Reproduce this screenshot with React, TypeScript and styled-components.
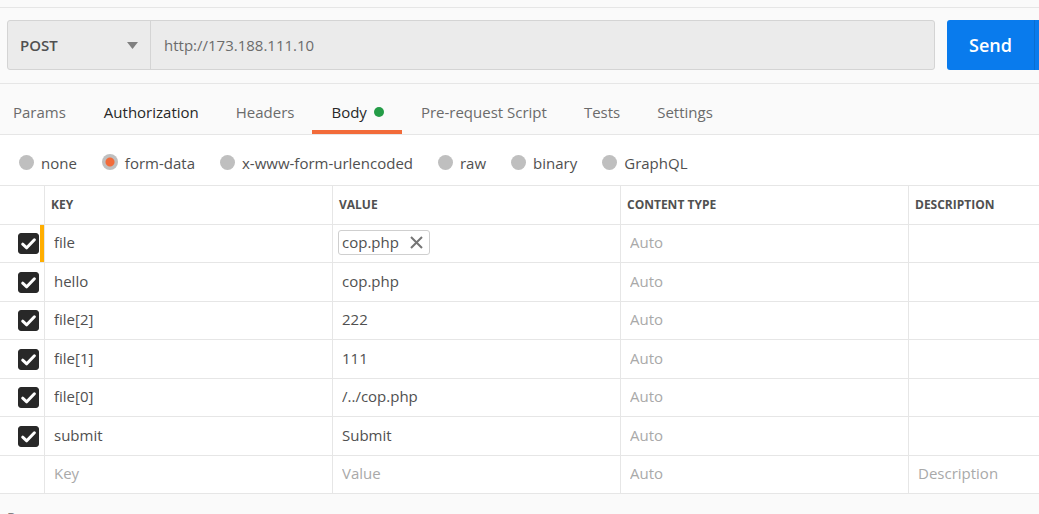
import React, { useState } from "react";
import styled, { createGlobalStyle } from "styled-components";

const GlobalStyle = createGlobalStyle`
  *, *::before, *::after { box-sizing: border-box; }
  body {
    margin: 0;
    background: #fafafa;
    color: #505050;
    font-family: "Open Sans", "Noto Sans", sans-serif;
    font-size: 15px;
    line-height: 20px;
  }
  button, input, select { font: inherit; color: inherit; margin: 0; }
`;

const Page = styled.main`
  display: flex;
  flex-direction: column;
  height: 100vh;
  overflow: hidden;
`;

const TopStrip = styled.div`
  flex: none;
  height: 8px;
  border-bottom: 1px solid #e6e6e6;
`;

const RequestBar = styled.form`
  flex: none;
  display: flex;
  gap: 12px;
  padding: 12px 0 13px 7px;
  border-bottom: 1px solid #e6e6e6;
`;

const UrlGroup = styled.div`
  display: flex;
  flex: 1;
  min-width: 0;
  height: 50px;
  border: 1px solid #d4d4d4;
  border-radius: 3px;
  background: #ebebeb;
`;

const MethodBox = styled.div`
  display: grid;
  grid-template-columns: 1fr 23px;
  align-items: center;
  width: 143px;
  border-right: 1px solid #d4d4d4;
`;

const MethodSelect = styled.select`
  grid-area: 1 / 1 / 2 / 3;
  width: 100%;
  height: 100%;
  padding: 0 12px;
  border: 0;
  background: transparent;
  appearance: none;
  font-weight: 600;
  outline: none;
`;

const MethodArrow = styled.svg`
  grid-area: 1 / 2;
  width: 11px;
  height: 7px;
  fill: #808080;
  pointer-events: none;
`;

const UrlInput = styled.input`
  flex: 1;
  min-width: 0;
  padding: 0 13px;
  border: 0;
  background: transparent;
  color: #6b6b6b;
  outline: none;
`;

const SendGroup = styled.div`
  display: flex;
  height: 50px;
  border-radius: 3px 0 0 3px;
  overflow: hidden;
`;

const SendButton = styled.button`
  width: 87px;
  padding: 0;
  border: 0;
  background: #097bed;
  color: #fff;
  font-size: 18px;
  font-weight: 600;
`;

const SendMore = styled.button`
  width: 5px;
  padding: 0;
  border: 0;
  border-left: 1px solid #0a6dd0;
  background: #097bed;
`;

const Tabs = styled.nav`
  flex: none;
  display: flex;
  height: 51px;
  border-bottom: 1px solid #e6e6e6;
`;

const Tab = styled.button<{ $active?: boolean; $strong?: boolean }>`
  display: flex;
  align-items: center;
  gap: 7px;
  padding: 10px 18px 0 19px;
  border: 0;
  border-bottom: 4px solid ${(p) => (p.$active ? "#f26b3a" : "transparent")};
  background: none;
  color: ${(p) => (p.$active || p.$strong ? "#282828" : "#6b6b6b")};
  white-space: nowrap;

  &:first-child { padding: 10px 19px 0 13px; }
`;

const StatusDot = styled.span`
  width: 10px;
  height: 10px;
  border-radius: 50%;
  background: #249c47;
`;

const BodyPanel = styled.section`
  flex: none;
  background: #fff;
`;

const ModeList = styled.div`
  display: flex;
  align-items: center;
  gap: 25px;
  height: 50px;
  padding: 6px 19px 0;
`;

const Mode = styled.label`
  display: flex;
  align-items: center;
  gap: 7px;
  white-space: nowrap;
`;

const Radio = styled.input`
  appearance: none;
  width: 15px;
  height: 15px;
  margin-bottom: 2px;
  border-radius: 50%;
  background: #bfbfbf;

  &:checked {
    width: 16px;
    height: 16px;
    background: radial-gradient(circle, #f26b3a 4px, #bfbfbf 5px);
  }
`;

const Table = styled.table`
  width: 100%;
  table-layout: fixed;
  border-collapse: separate;
  border-spacing: 0;
  border-top: 1px solid #e6e6e6;
`;

const CheckColumn = styled.col`
  width: 45px;
`;

const FieldColumn = styled.col`
  width: 288px;
`;

const Row = styled.tr`
  height: 38px;

  &:nth-child(even) { height: 39px; }
`;

const HeadCell = styled.th`
  height: 39px;
  padding: 0 6px;
  border-bottom: 1px solid #e6e6e6;
  border-right: 1px solid #e6e6e6;
  font-size: 12px;
  font-weight: 700;
  text-align: left;

  &:last-child { border-right: 0; }
`;

const Cell = styled.td`
  padding: 0 5px 3px;
  border-bottom: 1px solid #e6e6e6;
  border-right: 1px solid #e6e6e6;

  &:last-child { border-right: 0; }
`;

const CheckCell = styled(Cell)<{ $marked?: boolean }>`
  padding: 0 0 0 18px;
  box-shadow: ${(p) => (p.$marked ? "inset -4px 0 #ffae00" : "none")};
`;

const CheckBox = styled.span`
  display: grid;
  width: 21px;
  height: 21px;
`;

const CheckInput = styled.input`
  grid-area: 1 / 1;
  appearance: none;
  width: 21px;
  height: 21px;
  border: 1px solid #bfbfbf;
  border-radius: 3px;

  &:checked { background: #282828; border-color: #282828; }
`;

const CheckMark = styled.svg`
  grid-area: 1 / 1;
  width: 21px;
  height: 21px;
  fill: none;
  stroke: #fff;
  stroke-width: 3;
  stroke-linecap: round;
  stroke-linejoin: round;
  pointer-events: none;
`;

const CellInput = styled.input`
  display: block;
  width: 100%;
  height: 24px;
  padding: 0 4px;
  border: 0;
  background: transparent;
  outline: none;

  &::placeholder { color: #a9a9a9; opacity: 1; }
`;

const FileChip = styled.div`
  display: flex;
  align-items: center;
  gap: 11px;
  width: fit-content;
  height: 25px;
  padding: 0 6px 0 3px;
  border: 1px solid #cfcfcf;
  border-radius: 3px;
`;

const RemoveButton = styled.button`
  display: flex;
  padding: 0;
  border: 0;
  background: none;
`;

const RemoveIcon = styled.svg`
  width: 13px;
  height: 13px;
  stroke: #757575;
  stroke-width: 2;
`;

const ResponseTitle = styled.h2`
  flex: none;
  margin: 0;
  padding: 14px 7px;
  color: #808080;
  font-size: 14px;
  font-weight: 400;
  line-height: 20px;
`;

const tabs = [
  { name: "Params" },
  { name: "Authorization", strong: true },
  { name: "Headers" },
  { name: "Body", active: true },
  { name: "Pre-request Script" },
  { name: "Tests" },
  { name: "Settings" },
];

const modes = ["none", "form-data", "x-www-form-urlencoded", "raw", "binary", "GraphQL"];

const fields = [
  { key: "file", value: "cop.php", isFile: true },
  { key: "hello", value: "cop.php" },
  { key: "file[2]", value: "222" },
  { key: "file[1]", value: "111" },
  { key: "file[0]", value: "/../cop.php" },
  { key: "submit", value: "Submit" },
];

function Check({ label }: { label: string }) {
  const [on, setOn] = useState(true);
  return (
    <CheckBox>
      <CheckInput type="checkbox" aria-label={label} checked={on} onChange={() => setOn(!on)} />
      {on && (
        <CheckMark viewBox="0 0 21 21" aria-hidden="true">
          <path d="M4.7 11.2 8.7 14.8 16.4 6.8" />
        </CheckMark>
      )}
    </CheckBox>
  );
}

export default function App() {
  const [mode, setMode] = useState("form-data");

  return (
    <Page>
      <GlobalStyle />
      <TopStrip />
      <RequestBar onSubmit={(e) => e.preventDefault()}>
        <UrlGroup>
          <MethodBox>
            <MethodSelect aria-label="Method" defaultValue="POST">
              <option>POST</option>
            </MethodSelect>
            <MethodArrow viewBox="0 0 11 7" aria-hidden="true">
              <path d="M0 0h11L5.5 7z" />
            </MethodArrow>
          </MethodBox>
          <UrlInput aria-label="Request URL" defaultValue="http://173.188.111.10" />
        </UrlGroup>
        <SendGroup>
          <SendButton type="submit">Send</SendButton>
          <SendMore type="button" aria-label="More send options" />
        </SendGroup>
      </RequestBar>

      <Tabs>
        {tabs.map((t) => (
          <Tab key={t.name} type="button" $active={t.active} $strong={t.strong}>
            {t.name}
            {t.active && <StatusDot />}
          </Tab>
        ))}
      </Tabs>

      <BodyPanel>
        <ModeList role="radiogroup" aria-label="Body type">
          {modes.map((m) => (
            <Mode key={m}>
              <Radio type="radio" name="mode" checked={mode === m} onChange={() => setMode(m)} />
              {m}
            </Mode>
          ))}
        </ModeList>

        <Table>
          <colgroup>
            <CheckColumn />
            <FieldColumn />
            <FieldColumn />
            <FieldColumn />
            <col />
          </colgroup>
          <thead>
            <tr>
              <HeadCell />
              <HeadCell>KEY</HeadCell>
              <HeadCell>VALUE</HeadCell>
              <HeadCell>CONTENT TYPE</HeadCell>
              <HeadCell>DESCRIPTION</HeadCell>
            </tr>
          </thead>
          <tbody>
            {fields.map((f) => (
              <Row key={f.key}>
                <CheckCell $marked={f.isFile}>
                  <Check label={`Include ${f.key}`} />
                </CheckCell>
                <Cell>
                  <CellInput aria-label="Key" defaultValue={f.key} />
                </Cell>
                <Cell>
                  {f.isFile ? (
                    <FileChip>
                      {f.value}
                      <RemoveButton type="button" aria-label="Remove file">
                        <RemoveIcon viewBox="0 0 13 13" aria-hidden="true">
                          <path d="M1 1l11 11M12 1L1 12" />
                        </RemoveIcon>
                      </RemoveButton>
                    </FileChip>
                  ) : (
                    <CellInput aria-label="Value" defaultValue={f.value} />
                  )}
                </Cell>
                <Cell>
                  <CellInput aria-label="Content type" placeholder="Auto" />
                </Cell>
                <Cell>
                  <CellInput aria-label="Description" />
                </Cell>
              </Row>
            ))}
            <Row>
              <CheckCell />
              <Cell>
                <CellInput aria-label="New key" placeholder="Key" />
              </Cell>
              <Cell>
                <CellInput aria-label="New value" placeholder="Value" />
              </Cell>
              <Cell>
                <CellInput aria-label="New content type" placeholder="Auto" />
              </Cell>
              <Cell>
                <CellInput aria-label="New description" placeholder="Description" />
              </Cell>
            </Row>
          </tbody>
        </Table>
      </BodyPanel>

      <ResponseTitle>Response</ResponseTitle>
    </Page>
  );
}
